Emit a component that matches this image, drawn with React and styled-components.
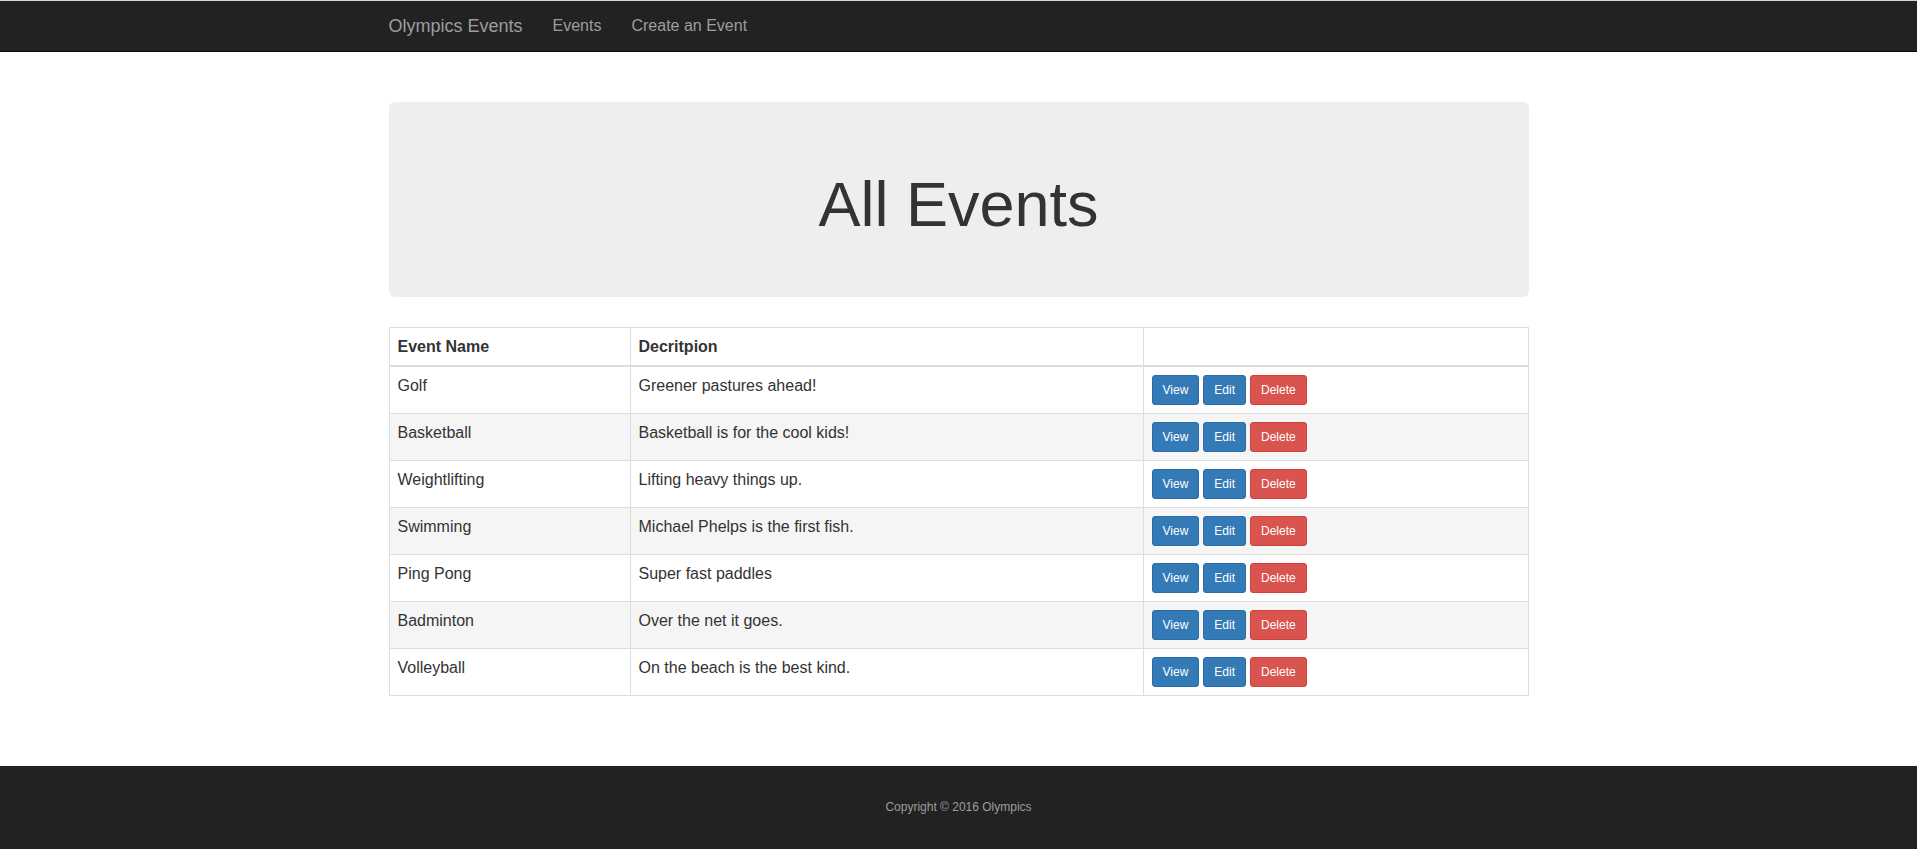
import React from 'react';
import styled, { createGlobalStyle } from 'styled-components';

const GlobalStyle = createGlobalStyle`
    html, body {
        margin: 0;
        padding: 0;
        background: #fff;
    }
    body {
        font-family: "Liberation Sans", Arial, sans-serif;
        font-size: 16px;
        line-height: 1.42857143;
        color: #333;
    }
    * {
        box-sizing: border-box;
    }
`;

const Page = styled.div`
    min-height: 849px;
    display: flex;
    flex-direction: column;
    border-top: 1px solid #d4d4d4;
`;

const Navbar = styled.nav`
    background: #222;
    border-bottom: 1px solid #080808;
    height: 51px;
`;

const Container = styled.div`
    width: 1170px;
    margin: 0 auto;
    padding: 0 15px;
`;

const NavInner = styled(Container)`
    display: flex;
    align-items: center;
    height: 50px;
`;

const Brand = styled.a`
    font-size: 18px;
    line-height: 20px;
    padding: 15px 15px 15px 0;
    color: #9d9d9d;
    text-decoration: none;
`;

const NavLink = styled.a`
    font-size: 16px;
    line-height: 20px;
    padding: 15px;
    color: #9d9d9d;
    text-decoration: none;
`;

const Main = styled(Container)`
    padding-top: 50px;
    flex: 1;
`;

const Jumbotron = styled.div`
    background: #eee;
    border-radius: 6px;
    padding: 48px 60px;
    margin-bottom: 30px;
    text-align: center;
`;

const Title = styled.h1`
    margin: 20px 0 10px;
    font-size: 63px;
    font-weight: 500;
    line-height: 1.1;
    color: #333;
`;

const Table = styled.table`
    width: 100%;
    border-collapse: collapse;
    border: 1px solid #ddd;
    margin-bottom: 20px;
`;

const Th = styled.th`
    text-align: left;
    font-weight: bold;
    padding: 8px;
    line-height: 21px;
    border: 1px solid #ddd;
    border-bottom: 2px solid #ddd;
    width: ${(p) => p.$w || 'auto'};
`;

const Row = styled.tr`
    background: ${(p) => (p.$odd ? '#f5f5f5' : '#fff')};
`;

const Td = styled.td`
    padding: 8px;
    line-height: 21px;
    vertical-align: top;
    border: 1px solid #ddd;
`;

const Buttons = styled.div`
    display: flex;
    gap: 4px;
`;

const Button = styled.button`
    font-family: inherit;
    font-size: 12px;
    line-height: 1.5;
    padding: 5px 10px;
    height: 30px;
    border-radius: 3px;
    color: #fff;
    cursor: pointer;
    background: ${(p) => (p.$danger ? '#d9534f' : '#337ab7')};
    border: 1px solid ${(p) => (p.$danger ? '#d43f3a' : '#2e6da4')};
`;

const Footer = styled.footer`
    background: #222;
    padding: 30px 0 31px;
    text-align: center;
    font-size: 12px;
    line-height: 22px;
    color: #9d9d9d;
`;

const events = [
    { name: 'Golf', desc: 'Greener pastures ahead!' },
    { name: 'Basketball', desc: 'Basketball is for the cool kids!' },
    { name: 'Weightlifting', desc: 'Lifting heavy things up.' },
    { name: 'Swimming', desc: 'Michael Phelps is the first fish.' },
    { name: 'Ping Pong', desc: 'Super fast paddles' },
    { name: 'Badminton', desc: 'Over the net it goes.' },
    { name: 'Volleyball', desc: 'On the beach is the best kind.' },
];

function App() {
    return (
        <Page>
            <GlobalStyle />
            <Navbar>
                <NavInner>
                    <Brand href="#">Olympics Events</Brand>
                    <NavLink href="#">Events</NavLink>
                    <NavLink href="#">Create an Event</NavLink>
                </NavInner>
            </Navbar>

            <Main>
                <Jumbotron>
                    <Title>All Events</Title>
                </Jumbotron>

                <Table>
                    <thead>
                        <tr>
                            <Th $w="241px">Event Name</Th>
                            <Th $w="513px">Decritpion</Th>
                            <Th></Th>
                        </tr>
                    </thead>
                    <tbody>
                        {events.map((ev, i) => (
                            <Row key={ev.name} $odd={i % 2 === 1}>
                                <Td>{ev.name}</Td>
                                <Td>{ev.desc}</Td>
                                <Td>
                                    <Buttons>
                                        <Button>View</Button>
                                        <Button>Edit</Button>
                                        <Button $danger>Delete</Button>
                                    </Buttons>
                                </Td>
                            </Row>
                        ))}
                    </tbody>
                </Table>
            </Main>

            <Footer>Copyright © 2016 Olympics</Footer>
        </Page>
    );
}

export default App;
